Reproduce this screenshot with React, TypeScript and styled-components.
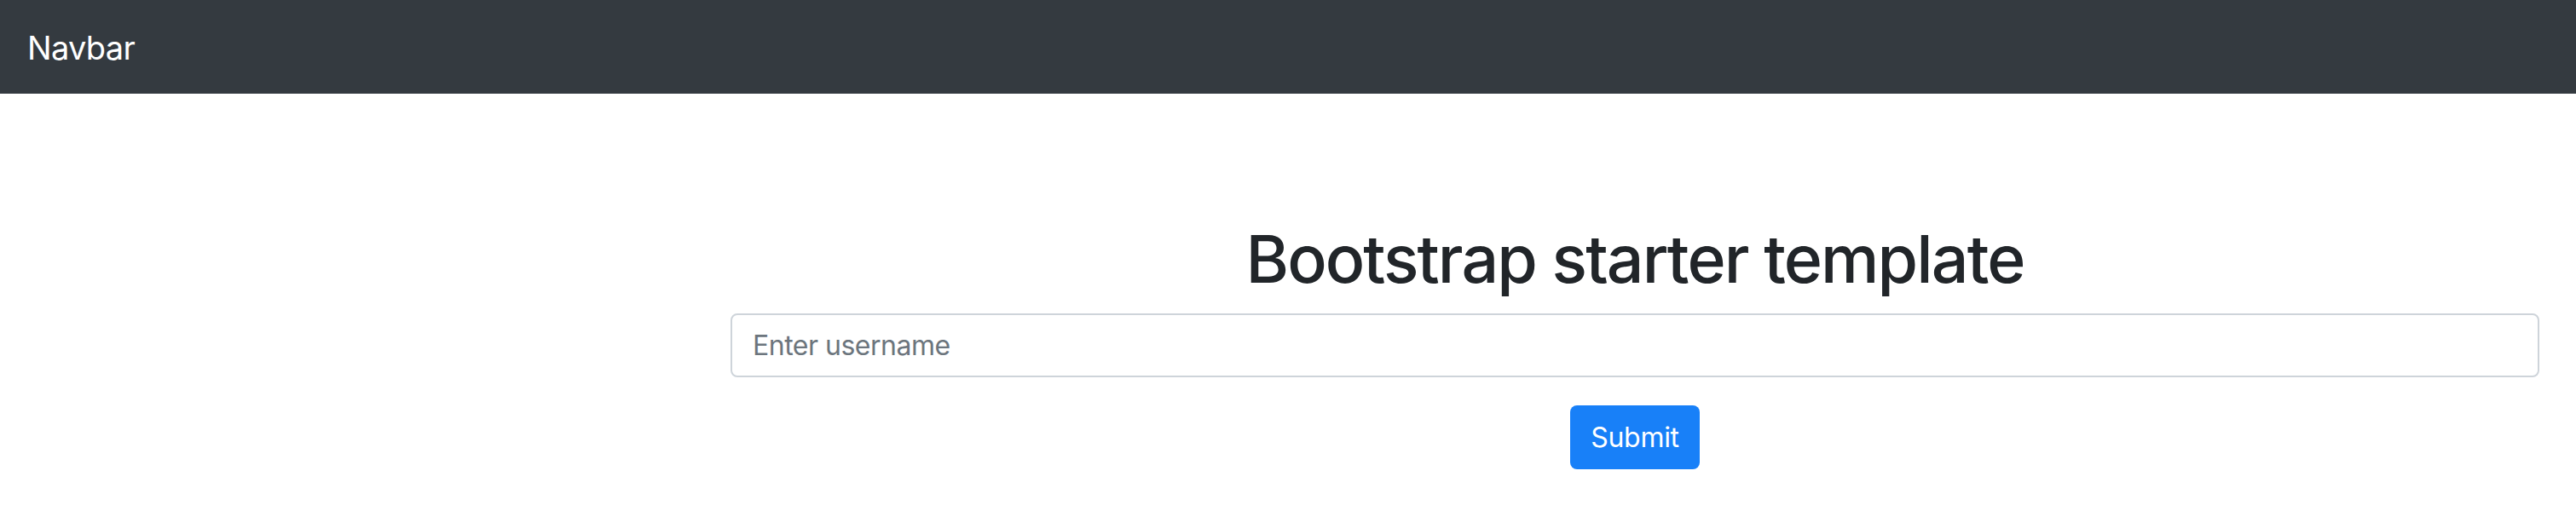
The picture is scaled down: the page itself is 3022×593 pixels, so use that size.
import React from 'react'
import styled, { createGlobalStyle } from 'styled-components'

const GlobalStyle = createGlobalStyle`
  html, body {
    margin: 0;
    padding: 0;
    background: #fff;
  }
  body {
    font-family: Inter, 'Noto Sans', 'Liberation Sans', sans-serif;
    color: #212529;
  }
  * {
    box-sizing: border-box;
  }
`

const Navbar = styled.nav`
  display: flex;
  align-items: center;
  height: 110px;
  padding: 0 32px;
  background: #343a40;
`

const Brand = styled.a`
  color: #fff;
  font-size: 38px;
  line-height: 1;
  letter-spacing: -0.7px;
  text-decoration: none;
  margin-top: 2px;
`

const Main = styled.main`
  display: flex;
  flex-direction: column;
  align-items: center;
  padding: 146px 43px 0 857px;
`

const Title = styled.h1`
  margin: 0 0 16px;
  font-size: 77px;
  font-weight: 500;
  line-height: 96px;
  letter-spacing: -1.9px;
  color: #212529;
`

const UsernameInput = styled.input`
  width: 100%;
  height: 75px;
  padding: 0 24px;
  font-family: inherit;
  font-size: 32px;
  color: #495057;
  background: #fff;
  border: 2px solid #ced4da;
  border-radius: 8px;
  outline: none;

  &::placeholder {
    color: #6c757d;
    letter-spacing: -0.5px;
  }
`

const SubmitButton = styled.button`
  margin-top: 33px;
  height: 75px;
  padding: 0 24px;
  font-family: inherit;
  font-size: 32px;
  letter-spacing: -0.3px;
  color: #fff;
  background: #1880f8;
  border: none;
  border-radius: 8px;
  cursor: pointer;
`

export default function App() {
  return (
    <>
      <GlobalStyle />
      <Navbar>
        <Brand href="#">Navbar</Brand>
      </Navbar>
      <Main>
        <Title>Bootstrap starter template</Title>
        <UsernameInput type="text" placeholder="Enter username" />
        <SubmitButton type="submit">Submit</SubmitButton>
      </Main>
    </>
  )
}
